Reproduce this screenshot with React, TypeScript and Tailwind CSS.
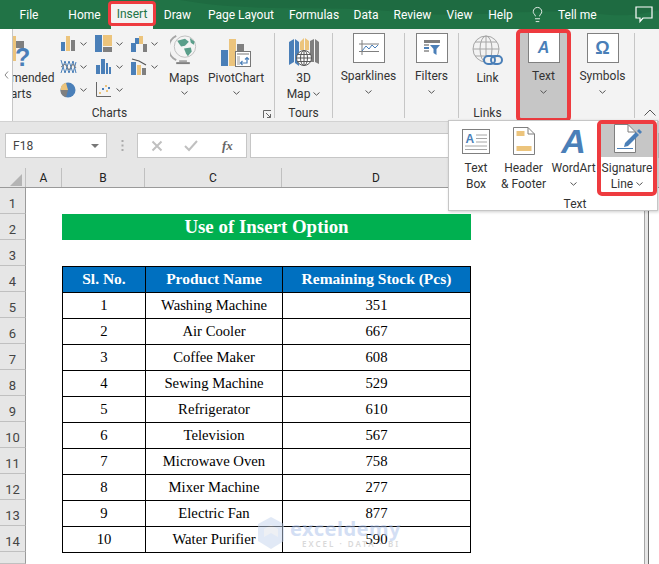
import { Lightbulb } from "lucide-react";

const BLUE = "#4a7fb8";
const TAN = "#ecc47c";
const GRAY = "#7f7f7f";

const tabs = [
  { name: "File", w: "w-[58px]" },
  { name: "Home", w: "w-[53px]" },
  { name: "Insert", w: "w-[42px]" },
  { name: "Draw", w: "w-[49px]" },
  { name: "Page Layout", w: "w-[78px]" },
  { name: "Formulas", w: "w-[68px]" },
  { name: "Data", w: "w-[36px]" },
  { name: "Review", w: "w-[57px]" },
  { name: "View", w: "w-[37px]" },
  { name: "Help", w: "w-[45px]" },
];

const products = [
  ["1", "Washing Machine", "351"],
  ["2", "Air Cooler", "667"],
  ["3", "Coffee Maker", "608"],
  ["4", "Sewing Machine", "529"],
  ["5", "Refrigerator", "610"],
  ["6", "Television", "567"],
  ["7", "Microwave Oven", "758"],
  ["8", "Mixer Machine", "277"],
  ["9", "Electric Fan", "877"],
  ["10", "Water Purifier", "590"],
];

function Chevron({ className = "" }: { className?: string }) {
  return (
    <svg width="7" height="4" viewBox="0 0 7 4" className={className}>
      <path d="M0.5 0.5 L3.5 3.2 L6.5 0.5" fill="none" stroke="#555" strokeWidth="1" />
    </svg>
  );
}

function BarIcon() {
  return (
    <svg width="15" height="15" viewBox="0 0 15 15">
      <rect x="0" y="6" width="4" height="9" fill={BLUE} />
      <rect x="5" y="0" width="4" height="15" fill={TAN} />
      <rect x="10" y="4" width="4" height="11" fill={GRAY} />
    </svg>
  );
}
function TreemapIcon() {
  return (
    <svg width="17" height="17" viewBox="0 0 17 17">
      <rect x="0" y="0" width="7" height="17" fill={BLUE} />
      <rect x="8" y="0" width="9" height="11" fill={TAN} />
      <rect x="8" y="12" width="9" height="5" fill={GRAY} />
    </svg>
  );
}
function WaterfallIcon() {
  return (
    <svg width="16" height="16" viewBox="0 0 16 16">
      <path d="M0 16 V7 H4 V2 H8 V8 H5 V16 Z" fill={BLUE} />
      <rect x="8" y="0" width="4" height="8" fill={TAN} />
      <rect x="12" y="8" width="4" height="8" fill={GRAY} />
    </svg>
  );
}
function LineIcon() {
  return (
    <svg width="17" height="16" viewBox="0 0 17 16" fill="none" strokeWidth="1">
      <path d="M1 1 L5 14 L9 2 L13 14 L16 3" stroke={BLUE} />
      <path d="M1 14 L5 2 L9 14 L13 2 L16 14" stroke={BLUE} />
      <path d="M1 8 L5 5 L9 11 L13 5 L16 9" stroke={GRAY} />
    </svg>
  );
}
function ColumnsIcon() {
  return (
    <svg width="15" height="15" viewBox="0 0 15 15">
      <rect x="0" y="6" width="4" height="9" fill={BLUE} />
      <rect x="5" y="0" width="4" height="15" fill={BLUE} />
      <rect x="10" y="4" width="2" height="11" fill={BLUE} />
      <rect x="13" y="8" width="2" height="7" fill={BLUE} />
    </svg>
  );
}
function ParetoIcon() {
  return (
    <svg width="16" height="17" viewBox="0 0 16 17">
      <rect x="0" y="4" width="5" height="13" fill={BLUE} />
      <rect x="6" y="7" width="4" height="10" fill={TAN} />
      <rect x="11" y="10" width="4" height="7" fill={GRAY} />
      <path d="M1 1 L8 3 L15 7" stroke="#555" strokeWidth="1.2" fill="none" />
    </svg>
  );
}
function PieIcon() {
  return (
    <svg width="16" height="16" viewBox="0 0 16 16">
      <circle cx="8" cy="8" r="7.5" fill={BLUE} />
      <path d="M8 8 L0.5 8 A7.5 7.5 0 0 1 6 0.8 Z" fill={TAN} />
      <path d="M8 8 L0.5 8 A7.5 7.5 0 0 0 6 15.2 Z" fill={GRAY} />
    </svg>
  );
}
function ScatterIcon() {
  return (
    <svg width="15" height="15" viewBox="0 0 15 15">
      <path d="M0.5 0 V14.5 H15" stroke="#666" fill="none" />
      <rect x="3" y="10" width="2" height="2" fill={TAN} />
      <rect x="6" y="6" width="2" height="2" fill={BLUE} />
      <rect x="9" y="3" width="2" height="2" fill={TAN} />
      <rect x="10" y="8" width="2" height="2" fill={TAN} />
      <rect x="12" y="5" width="2" height="2" fill={BLUE} />
    </svg>
  );
}

function RecommendedIcon() {
  return (
    <svg width="40" height="36" viewBox="0 0 40 36">
      <rect x="18" y="5" width="4" height="25" fill={TAN} />
      <rect x="22" y="10" width="8" height="7" fill={GRAY} />
      <text x="21" y="35" fontSize="25" fontWeight="700" fill={BLUE} fontFamily="'Liberation Sans', sans-serif">?</text>
    </svg>
  );
}
function MapsIcon() {
  return (
    <svg width="28" height="33" viewBox="0 0 28 34">
      <path d="M6 2 A14 14 0 0 0 6 27" fill="none" stroke="#a6a6a6" strokeWidth="2" />
      <circle cx="15" cy="13" r="11" fill="#f4f4f4" stroke="#bfbfbf" />
      <path d="M7 7 L15 5 L19 8 L15 12 L11 13 L9 10 Z" fill="#5a9e8a" />
      <path d="M14 15 L21 14 L22 18 L18 23 L16 20 Z" fill="#5a9e8a" />
      <path d="M20 4 L25 8 L24 11 L21 9 Z" fill="#5a9e8a" />
      <rect x="9" y="27" width="8" height="2" fill="#a6a6a6" />
      <rect x="6" y="29" width="14" height="2" fill="#7f7f7f" />
    </svg>
  );
}
function PivotIcon() {
  return (
    <svg width="30" height="28" viewBox="0 0 30 28">
      <rect x="0" y="11" width="7" height="16" fill={BLUE} />
      <rect x="8" y="0" width="7" height="27" fill={TAN} />
      <rect x="16" y="5" width="7" height="7" fill={GRAY} />
      <rect x="14.5" y="12.5" width="15" height="15" fill="#fff" stroke="#777" />
      <rect x="16" y="14" width="12" height="2" fill="#bbb" />
      <rect x="16" y="17" width="3" height="9" fill="#ccc" />
      <path d="M20 24 H26 V19 M24 20.5 L26 18.5 L28 20.5 M21.5 22 L19.5 24 L21.5 26" fill="none" stroke={BLUE} strokeWidth="1.2" />
    </svg>
  );
}
function Map3DIcon() {
  return (
    <svg width="30" height="29" viewBox="0 0 30 29">
      <path d="M0 4 L5 1 V24 L0 27 Z" fill={BLUE} />
      <path d="M6 1 L10 4 V28 L6 25 Z" fill={BLUE} />
      <path d="M11 4 L15 0 V12 H11 Z" fill={TAN} />
      <path d="M16 0 L20 3 V12 H16 Z" fill={TAN} />
      <path d="M21 3 L25 1 V24 H21 Z" fill={GRAY} />
      <path d="M26 1 L30 4 V26 L26 24 Z" fill={GRAY} />
      <circle cx="15" cy="20" r="7.5" fill="#fff" stroke="#595959" />
      <path d="M7.5 20 H22.5 M8.5 16.5 H21.5 M8.5 23.5 H21.5 M15 12.5 V27.5" stroke="#595959" fill="none" />
      <ellipse cx="15" cy="20" rx="3.5" ry="7.5" stroke="#595959" fill="none" />
    </svg>
  );
}
function SparkIcon() {
  return (
    <svg width="20" height="16" viewBox="0 0 20 16" fill="none">
      <path d="M3 0 V15 M0 11.5 H20 M0 4 H20" stroke="#7f7f7f" />
      <path d="M3 11 L7 6 L10 9 L13 5 L16 8 L19 5" stroke={BLUE} />
    </svg>
  );
}
function FilterIcon() {
  return (
    <svg width="16" height="16" viewBox="0 0 16 16">
      <rect x="0" y="0" width="16" height="3" fill="#7f7f7f" />
      <rect x="0" y="4" width="5" height="2" fill="#a6a6a6" />
      <rect x="0" y="7" width="5" height="2" fill={BLUE} />
      <rect x="0" y="10" width="5" height="2" fill="#a6a6a6" />
      <path d="M6 5 H16 L12.5 9 V15 L9.5 13 V9 Z" fill={BLUE} />
    </svg>
  );
}
function LinkIcon() {
  return (
    <svg width="32" height="32" viewBox="0 0 32 32" fill="none">
      <circle cx="14" cy="14" r="13" stroke="#a6a6a6" />
      <ellipse cx="14" cy="14" rx="6" ry="13" stroke="#a6a6a6" />
      <path d="M14 1 V27 M1 14 H27 M3 7 H25 M3 21 H25" stroke="#a6a6a6" />
      <rect x="12" y="21" width="11" height="8" rx="4" stroke={BLUE} strokeWidth="2" fill="#f3f3f3" />
      <rect x="19" y="21" width="11" height="8" rx="4" stroke={BLUE} strokeWidth="2" />
    </svg>
  );
}
function TextBoxIcon() {
  return (
    <svg width="28" height="25" viewBox="0 0 28 25" fill="none">
      <rect x="0.5" y="0.5" width="27" height="24" fill="#fff" stroke="#7f7f7f" />
      <path d="M14 6 H25 M14 9.5 H25 M14 13 H25 M3 17 H25 M3 20.5 H25" stroke="#a6a6a6" />
      <text x="3.5" y="14" fontSize="12" fontWeight="700" fill={BLUE} fontFamily="'Liberation Sans', sans-serif">A</text>
    </svg>
  );
}
function HeaderFooterIcon() {
  return (
    <svg width="22" height="28" viewBox="0 0 22 28">
      <path d="M0.5 0.5 H15 L21.5 7 V27.5 H0.5 Z" fill="#fff" stroke="#7f7f7f" />
      <path d="M15 0.5 V7 H21.5" fill="none" stroke="#7f7f7f" />
      <rect x="3.5" y="4" width="8" height="5" fill={TAN} />
      <rect x="3.5" y="19" width="15" height="5" fill={TAN} />
    </svg>
  );
}
function SignatureIcon() {
  return (
    <svg width="28" height="29" viewBox="0 0 28 29">
      <path d="M0.5 0.5 H14 L21.5 8 V28.5 H0.5 Z" fill="#fff" stroke="#7f7f7f" />
      <path d="M14 0.5 V8 H21.5" fill="none" stroke="#7f7f7f" />
      <path d="M3 24.5 H19" stroke={BLUE} />
      <path d="M10 23 L11 19 L22 8 L25 11 L14 22 Z" fill={BLUE} />
      <path d="M23 7 L25 5 L28 8 L26 10 Z" fill={BLUE} />
    </svg>
  );
}
function CommentIcon() {
  return (
    <svg width="18" height="17" viewBox="0 0 18 17" fill="none">
      <path d="M1 1 H17 V12 H8 L5 15.5 V12 H1 Z" stroke="#fff" strokeWidth="1.2" />
    </svg>
  );
}
function Launcher() {
  return (
    <svg width="8" height="8" viewBox="0 0 8 8" fill="none">
      <path d="M0.5 8 V0.5 H8 M3 3 L7.5 7.5 M4 7.5 H7.5 V4" stroke="#666" />
    </svg>
  );
}

function SmallChart({ icon }: { icon?: React.ReactNode }) {
  return (
    <div className="flex items-center gap-[3px]">
      <div className="w-[18px] flex justify-center">{icon}</div>
      <Chevron />
    </div>
  );
}

function BigButton({
  icon,
  label,
  more = true,
  w,
}: {
  icon: React.ReactNode;
  label: React.ReactNode;
  more?: boolean;
  w: string;
}) {
  return (
    <div className={`${w} flex flex-col items-center`}>
      <div className="h-[34px] flex items-end justify-center">{icon}</div>
      <div className="mt-[3px] text-center leading-[16px]">{label}</div>
      {more && <Chevron className="mt-[5px]" />}
    </div>
  );
}

function BoxButton({ icon, label }: { icon: React.ReactNode; label: string }) {
  return (
    <div className="flex flex-col items-center">
      <div className="w-[32px] h-[30px] bg-white border border-[#808080] flex items-center justify-center">{icon}</div>
      <div className="mt-[5px] leading-[16px]">{label}</div>
      <Chevron className="mt-[6px]" />
    </div>
  );
}

function Sep() {
  return <div className="w-px bg-[#c6c6c6] mt-[4px] mb-[3px] shrink-0" />;
}

function RowNum({ n, h = "h-[26px]" }: { n?: number; h?: string }) {
  return (
    <div className={`${h} w-[26px] shrink-0 bg-[#e6e6e6] border-r border-b border-r-[#9a9a9a] border-b-[#c0c0c0] flex items-end justify-center pb-px text-[13px] leading-[16px] text-[#444] font-['Roboto',sans-serif]`}>
      {n}
    </div>
  );
}

function Watermark() {
  return (
    <div className="absolute left-[258px] top-[517px] flex items-center gap-[6px] opacity-50 pointer-events-none font-['Noto_Sans',sans-serif]">
      <svg width="26" height="32" viewBox="0 0 26 32">
        <path d="M13 0 L26 7 V24 L13 32 L0 24 V7 Z" fill="#c5d5ee" />
        <path d="M13 8 L20 12 V20 L13 16 L6 20 V12 Z" fill="#dfe3ea" />
      </svg>
      <div className="flex flex-col">
        <span className="text-[20px] leading-[21px] font-bold text-[#a9c0ea] tracking-[0.5px]">exceldemy</span>
        <span className="pl-[12px] text-[8px] leading-[10px] font-semibold text-[#b5b5b5] tracking-[2px]">EXCEL · DATA · BI</span>
      </div>
    </div>
  );
}

export default function App() {
  return (
    <div className="relative w-[659px] h-[564px] overflow-hidden bg-white text-[12px] text-[#333] font-['Roboto',sans-serif]">
      {/* title tabs */}
      <div className="relative h-[29px] bg-[#217346] flex text-white text-[12px]">
        <svg width="659" height="29" viewBox="0 0 659 29" className="absolute left-0 top-0">
          <path d="M180 0 C260 14 330 4 400 12 C470 20 540 6 600 14 C630 18 650 12 659 10 V0 Z" fill="#1e6b41" />
        </svg>
        {tabs.map((t) =>
          t.name === "Insert" ? (
            <div key={t.name} className="w-[42px] relative flex flex-col">
              <div className="absolute -left-[3px] -right-[3px] top-px h-[25px] bg-[#f3f3f3] border-[3px] border-[#ee3b3f] rounded-[4px] flex items-center justify-center text-[#217346]">
                Insert
              </div>
              <div className="mt-auto h-[5px] bg-[#f3f3f3]" />
            </div>
          ) : (
            <div key={t.name} className={`${t.w} relative flex items-center justify-center`}>
              {t.name}
            </div>
          ),
        )}
        <div className="relative w-[23px] flex items-center justify-end">
          <Lightbulb size={17} strokeWidth={1.2} />
        </div>
        <div className="relative ml-[12px] flex items-center">Tell me</div>
        <div className="relative ml-auto mr-[6px] flex items-center">
          <CommentIcon />
        </div>
      </div>

      {/* ribbon */}
      <div className="h-[93px] bg-[#f3f3f3] border-b border-[#d2d2d2] flex">
        <div className="w-[13px] shrink-0 bg-white border-r border-[#c6c6c6] flex items-center justify-center text-[#888] z-10">
          <svg width="5" height="8" viewBox="0 0 5 8" fill="none">
            <path d="M4 0.5 L1 4 L4 7.5" stroke="#888" />
          </svg>
        </div>

        {/* charts */}
        <div className="w-[261px] shrink-0 flex flex-col overflow-hidden">
          <div className="h-[76px] flex pt-[4px]">
            <div className="w-[80px] -ml-[39px] shrink-0 flex flex-col items-center">
              <div className="h-[34px] w-full flex items-end justify-center">
                <RecommendedIcon />
              </div>
              <div className="mt-[3px] text-center leading-[16px]">Recommended Charts</div>
            </div>
            <div className="ml-[5px] -mt-px w-[107px] shrink-0 grid grid-cols-3 grid-rows-3 h-[69px] items-center">
              <SmallChart icon={<BarIcon />} />
              <SmallChart icon={<TreemapIcon />} />
              <SmallChart icon={<WaterfallIcon />} />
              <SmallChart icon={<LineIcon />} />
              <SmallChart icon={<ColumnsIcon />} />
              <SmallChart icon={<ParetoIcon />} />
              <SmallChart icon={<PieIcon />} />
              <SmallChart icon={<ScatterIcon />} />
            </div>
            <BigButton w="w-[36px] shrink-0" icon={<MapsIcon />} label="Maps" />
            <BigButton w="w-[68px] shrink-0" icon={<PivotIcon />} label="PivotChart" />
          </div>
          <div className="flex-1 flex items-start">
            <div className="w-[193px] text-center leading-[16px]">Charts</div>
            <div className="ml-auto mr-[3px] mt-[5px]">
              <Launcher />
            </div>
          </div>
        </div>
        <Sep />

        {/* tours */}
        <div className="w-[57px] shrink-0 flex flex-col items-center">
          <div className="h-[76px] pt-[4px]">
            <BigButton
              w="w-[57px]"
              more={false}
              icon={<Map3DIcon />}
              label={
                <>
                  3D
                  <br />
                  <span className="inline-flex items-center gap-[3px]">
                    Map <Chevron />
                  </span>
                </>
              }
            />
          </div>
          <div className="leading-[16px]">Tours</div>
        </div>
        <Sep />

        <div className="w-[71px] shrink-0 flex justify-center pt-[4px]">
          <BoxButton icon={<SparkIcon />} label="Sparklines" />
        </div>
        <Sep />

        <div className="w-[53px] shrink-0 flex justify-center pt-[4px]">
          <BoxButton icon={<FilterIcon />} label="Filters" />
        </div>
        <Sep />

        {/* links */}
        <div className="w-[57px] shrink-0 flex flex-col items-center">
          <div className="h-[76px] pt-[4px]">
            <BigButton w="w-[57px]" more={false} icon={<LinkIcon />} label="Link" />
          </div>
          <div className="leading-[16px]">Links</div>
        </div>

        <div className="w-[55px] h-[93px] shrink-0 bg-[#c6c6c6] border-[4px] border-[#ee3b3f] rounded-[5px] flex flex-col items-center">
          <div className="w-[32px] h-[30px] bg-white border border-[#808080] border-t-0 flex items-center justify-center text-[16px] leading-none font-bold italic text-[#4a7fb8] font-['Liberation_Sans',sans-serif]">
            A
          </div>
          <div className="mt-[5px] leading-[16px]">Text</div>
          <Chevron className="mt-[6px]" />
        </div>

        <div className="w-[63px] shrink-0 flex justify-center pt-[4px]">
          <div className="flex flex-col items-center">
            <div className="w-[32px] h-[30px] bg-white border border-[#808080] flex items-center justify-center text-[18px] leading-none font-bold text-[#4a7fb8] font-['Liberation_Sans',sans-serif]">
              Ω
            </div>
            <div className="mt-[5px] leading-[16px]">Symbols</div>
            <Chevron className="mt-[6px]" />
          </div>
        </div>
        <Sep />
      </div>

      {/* formula bar */}
      <div className="h-[46px] bg-[#e6e6e6] pt-[11px] flex">
        <div className="ml-[5px] w-[102px] h-[25px] bg-white border border-[#c6c6c6] flex items-center justify-between px-[7px] text-[12px] text-[#444]">
          F18
          <svg width="8" height="4" viewBox="0 0 8 4">
            <path d="M0 0 H8 L4 4 Z" fill="#777" />
          </svg>
        </div>
        <div className="w-[30px] flex items-center justify-center h-[25px]">
          <svg width="3" height="11" viewBox="0 0 3 11">
            <path d="M1.5 0 V2 M1.5 4.5 V6.5 M1.5 9 V11" stroke="#aaa" strokeWidth="2" />
          </svg>
        </div>
        <div className="w-[110px] h-[25px] bg-white border border-[#c6c6c6] flex items-center text-[#b5b5b5]">
          <svg width="12" height="12" viewBox="0 0 12 12" className="ml-[13px]">
            <path d="M1.5 1.5 L10.5 10.5 M10.5 1.5 L1.5 10.5" stroke="#c0c0c0" strokeWidth="2" />
          </svg>
          <svg width="14" height="12" viewBox="0 0 14 12" className="ml-[21px]">
            <path d="M1 6 L5 10 L13 1" fill="none" stroke="#c0c0c0" strokeWidth="2" />
          </svg>
          <span className="ml-[24px] text-[13px] italic font-bold text-[#666] font-['Liberation_Serif',serif]">fx</span>
        </div>
        <div className="ml-[3px] flex-1 h-[25px] bg-white border border-[#c6c6c6]" />
      </div>

      {/* column headers */}
      <div className="h-[20px] bg-[#e6e6e6] flex text-[12px] text-[#222] border-b border-[#9a9a9a]">
        <div className="w-[26px] border-r border-[#c0c0c0] flex items-end justify-end pr-[3px] pb-[1px]">
          <svg width="12" height="12" viewBox="0 0 12 12">
            <path d="M12 0 V12 H0 Z" fill="#b4b4b4" />
          </svg>
        </div>
        <div className="w-[36px] border-r border-[#c0c0c0] flex items-center justify-center">A</div>
        <div className="w-[83px] border-r border-[#c0c0c0] flex items-center justify-center">B</div>
        <div className="w-[137px] border-r border-[#c0c0c0] flex items-center justify-center">C</div>
        <div className="w-[189px] border-r border-[#c0c0c0] flex items-center justify-center">D</div>
      </div>

      {/* sheet */}
      <div className="flex font-['Liberation_Serif',serif]">
        <div className="w-[644px] flex flex-col">
          <div className="flex">
            <RowNum n={1} />
          </div>
          <div className="flex">
            <RowNum n={2} />
            <div className="ml-[36px] w-[409px] h-[26px] pt-px bg-[#00b050] text-white font-bold text-[18.9px] flex items-center justify-center">
              Use of Insert Option
            </div>
          </div>
          <div className="flex">
            <RowNum n={3} />
          </div>
          <div className="flex">
            <RowNum n={4} />
            <div className="ml-[36px] w-[409px] h-[26px] grid grid-cols-[83px_137px_189px] bg-[#0070c0] text-white font-bold text-[15.5px] border-t border-black">
              <div className="flex items-center justify-center pb-[2px] border-l border-black">Sl. No.</div>
              <div className="flex items-center justify-center pb-[2px] border-l border-black">Product Name</div>
              <div className="flex items-center justify-center pb-[2px] border-x border-black">Remaining Stock (Pcs)</div>
            </div>
          </div>
          {products.map(([no, name, stock], i) => (
            <div className="flex" key={no}>
              <RowNum n={i + 5} />
              <div className="ml-[36px] w-[409px] h-[26px] grid grid-cols-[83px_137px_189px] text-black text-[14.7px] border-t border-black">
                <div className="flex items-center justify-center border-l border-black">{no}</div>
                <div className="flex items-center justify-center border-l border-black">{name}</div>
                <div className="flex items-center justify-center border-x border-black">{stock}</div>
              </div>
            </div>
          ))}
          <div className="flex">
            <RowNum h="h-[12px]" />
            <div className="ml-[36px] w-[409px] border-t border-black h-0" />
          </div>
        </div>
        <div className="w-[5px] h-[376px] bg-[#e6e6e6] border-l border-r border-l-[#a6a6a6] border-r-[#6e6e6e]" />
      </div>

      {/* insert > text flyout */}
      <div className="absolute left-[448px] top-[120px] w-[210px] h-[91px] bg-white border border-[#c6c6c6] shadow-[1px_1px_3px_rgba(0,0,0,0.2)] flex flex-col">
        <div className="flex h-[75px] items-start">
          <div className="w-[52px] ml-px flex flex-col items-center pt-[5px]">
            <div className="h-[30px] flex items-center"><TextBoxIcon /></div>
            <div className="mt-[4px] text-center leading-[16px]">Text<br />Box</div>
          </div>
          <div className="w-[43px] flex flex-col items-center pt-[5px]">
            <div className="h-[30px] flex items-center"><HeaderFooterIcon /></div>
            <div className="mt-[4px] text-center leading-[16px] whitespace-nowrap">Header<br />&amp; Footer</div>
          </div>
          <div className="w-[52px] pl-[5px] flex flex-col items-center pt-[5px]">
            <div className="h-[30px] flex items-center text-[34px] leading-none font-bold italic text-[#4a7fb8] font-['Liberation_Sans',sans-serif]">A</div>
            <div className="mt-[4px] text-center leading-[16px]">WordArt</div>
            <Chevron className="mt-[6px]" />
          </div>
          <div className="w-[60px] h-[76px] -mt-px border-[4px] border-[#ee3b3f] rounded-[5px] flex flex-col items-center bg-white">
            <div className="w-full h-[33px] bg-[#c6c6c6] flex justify-center pl-[2px]"><SignatureIcon /></div>
            <div className="mt-[3px] text-center leading-[16px]">Signature</div>
            <div className="flex items-center gap-[3px] leading-[16px]">Line <Chevron /></div>
          </div>
        </div>
        <div className="pl-[44px] text-center leading-[16px]">Text</div>
      </div>

      {/* collapse ribbon */}
      <svg width="12" height="7" viewBox="0 0 12 7" className="absolute left-[644px] top-[109px]">
        <path d="M0.5 6.5 L6 1 L11.5 6.5" fill="none" stroke="#555" />
      </svg>

      <Watermark />
    </div>
  );
}
